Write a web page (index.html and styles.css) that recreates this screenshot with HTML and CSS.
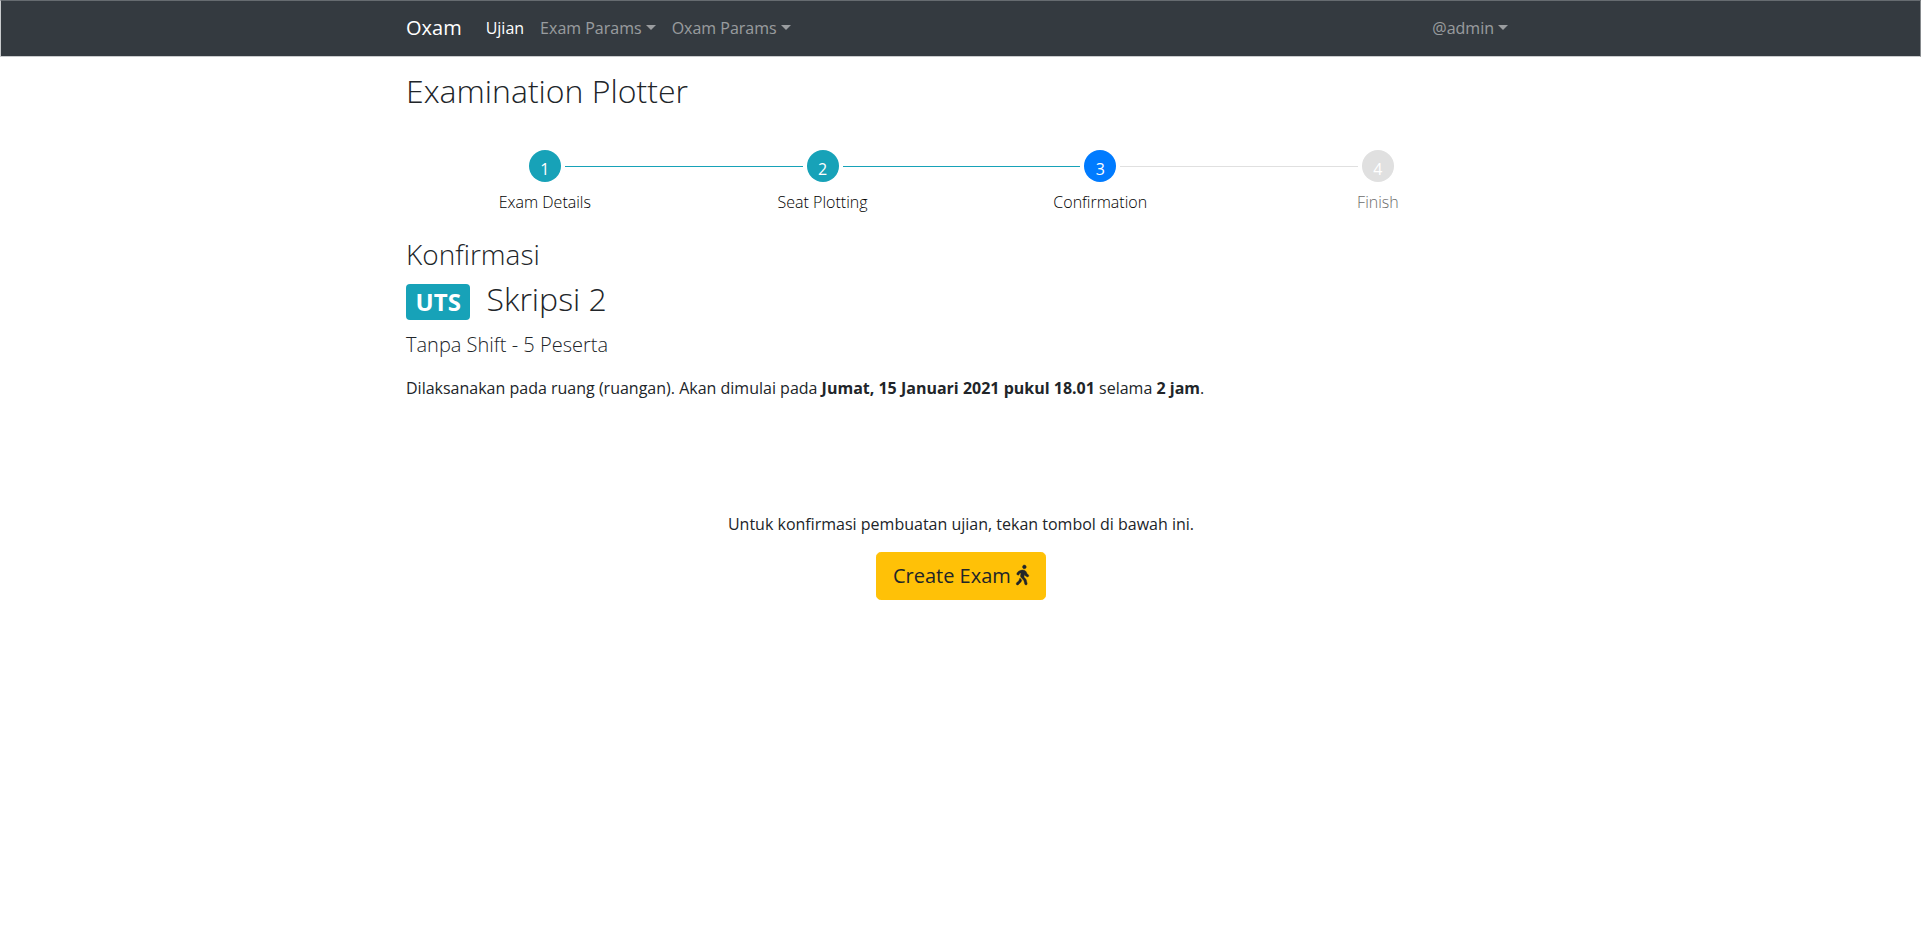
FILE: index.html
```html
<!DOCTYPE html>
<html lang="id">
<head>
<meta charset="utf-8">
<title>Oxam</title>
<link rel="stylesheet" href="styles.css">
</head>
<body>
<nav class="navbar">
  <div class="container navbar-inner">
    <a class="brand">Oxam</a>
    <ul class="nav">
      <li class="nav-link active">Ujian</li>
      <li class="nav-link dropdown">Exam Params</li>
      <li class="nav-link dropdown">Oxam Params</li>
    </ul>
    <ul class="nav nav-right">
      <li class="nav-link dropdown">@admin</li>
    </ul>
  </div>
</nav>
<main class="container">
  <h2 class="title">Examination Plotter</h2>
  <ol class="stepper">
    <li class="step done"><span class="circle">1</span><span class="label">Exam Details</span></li>
    <li class="step done"><span class="circle">2</span><span class="label">Seat Plotting</span></li>
    <li class="step current"><span class="circle">3</span><span class="label">Confirmation</span></li>
    <li class="step pending"><span class="circle">4</span><span class="label">Finish</span></li>
  </ol>
  <h3 class="section-title">Konfirmasi</h3>
  <h2 class="exam-name"><span class="badge">UTS</span><span>Skripsi 2</span></h2>
  <h5 class="exam-meta">Tanpa Shift - 5 Peserta</h5>
  <p class="schedule">Dilaksanakan pada ruang (ruangan). Akan dimulai pada <b>Jumat, 15 Januari 2021 pukul 18.01</b> selama <b>2 jam</b>.</p>
  <section class="confirm">
    <p class="hint">Untuk konfirmasi pembuatan ujian, tekan tombol di bawah ini.</p>
    <button class="btn">Create Exam
      <svg class="walk" viewBox="0 0 320 512"><path fill="currentColor" stroke="currentColor" stroke-width="10" d="M208 96c26.500 0 48-21.500 48-48S234.500 0 208 0s-48 21.500-48 48 21.500 48 48 48zm94.500 149.100l-23.300-11.800-9.700-29.400c-14.700-44.600-55.700-75.800-102.200-75.900-36-.1-55.900 10.100-93.300 25.200-21.600 8.700-39.300 25.200-49.700 46.200L17.600 213c-7.800 15.800-1.500 35 14.200 42.900 15.600 7.900 34.600 1.500 42.500-14.300L81 228c3.500-7 9.300-12.500 16.500-15.400l26.800-10.800-15.200 60.700c-5.200 20.800.4 42.900 14.900 58.800l59.900 65.400c7.200 7.900 12.300 17.400 14.900 27.700l18.300 73.300c4.300 17.100 21.700 27.600 38.800 23.300 17.100-4.300 27.600-21.700 23.300-38.800l-22.200-89c-2.600-10.300-7.700-19.900-14.900-27.700l-45.500-49.700 17.200-68.700 5.500 16.500c5.300 16.100 16.700 29.400 31.700 37l23.300 11.800c15.600 7.900 34.600 1.500 42.500-14.300 7.700-15.700 1.400-35.100-14.300-43zM73.600 385.800c-3.200 8.100-8 15.400-14.200 21.500l-50 50.100c-12.500 12.500-12.500 32.800 0 45.300s32.700 12.500 45.200 0l59.400-59.400c6.100-6.100 10.900-13.400 14.200-21.500l13.500-33.800c-55.300-60.300-38.700-41.800-47.400-53.700l-20.700 51.500z"/></svg>
    </button>
  </section>
</main>
</body>
</html>
```

FILE: styles.css
```css
*, *::before, *::after { box-sizing: border-box; }
body {
  margin: 0;
  font: 400 16px/1.5 "Open Sans", "Noto Sans", sans-serif;
  color: #212529;
  background: #fff;
}
h2, h3, h5, p, ul, ol { margin: 0; padding: 0; list-style: none; }
h2, h3, h5 { font-weight: 300; line-height: 1.2; }
h2 { font-size: 32px; }
.container { width: 1139px; margin: 0 auto; padding: 0 14px 0 15px; }

.navbar {
  height: 57px;
  background: #343a40;
  border: 1px solid #666b70;
  border-left-color: #c9cbcd;
  border-right-color: #85898c;
  border-bottom-color: #c9cbcd;
}
.navbar-inner { display: flex; align-items: center; height: 53px; }
.brand { font-size: 20px; color: #fff; margin-right: 16px; }
.nav { display: flex; }
.nav-link { padding: 8px; color: rgba(255, 255, 255, .5); }
.nav-link.active { color: #fff; }
.nav-right { margin-left: auto; }
.dropdown::after {
  content: "";
  display: inline-block;
  margin-left: 4px;
  vertical-align: 4px;
  border-top: 5px solid;
  border-right: 5px solid transparent;
  border-left: 5px solid transparent;
}

.title { margin-top: 15px; }
.stepper { display: grid; grid-template-columns: repeat(4, 277.700px); margin-top: 40px; }
.step { position: relative; display: flex; flex-direction: column; align-items: center; }
.circle {
  width: 32px;
  height: 32px;
  border-radius: 50%;
  padding-top: 3px;
  line-height: 32px;
  text-align: center;
  color: #fff;
  background: #17a2b8;
}
.step + .step::before {
  content: "";
  position: absolute;
  top: 16px;
  left: calc(-50% + 20px);
  right: calc(50% + 20px);
  height: 1px;
  background: #17a2b8;
}
.label { margin-top: 8px; font-weight: 300; color: #000; }
.current .circle { background: #007bff; }
.pending .circle { background: #e0e0e0; }
.step.pending::before { background: #e0e0e0; }
.pending .label { color: #6c6c6c; }

.section-title { font-size: 28px; margin-top: 24px; }
.exam-name { display: flex; gap: 16px; margin-top: 8px; }
.badge {
  align-self: flex-start;
  margin-top: 4px;
  padding: 6px 9.600px;
  border-radius: 4px;
  font-size: 24px;
  font-weight: 700;
  line-height: 1;
  color: #fff;
  background: #17a2b8;
}
.exam-meta { font-size: 20px; margin-top: 13px; }
.schedule { margin-top: 19px; }
.confirm { display: flex; flex-direction: column; align-items: center; margin-top: 112px; }
.btn {
  margin-top: 16px;
  padding: 8px 16px;
  border: 1px solid #ffc107;
  border-radius: 4.800px;
  height: 48px;
  font: 400 20px/30px "Open Sans", "Noto Sans", sans-serif;
  color: #212529;
  background: #ffc107;
}
.walk { width: 13px; height: 20px; vertical-align: -2px; overflow: visible; }
```
